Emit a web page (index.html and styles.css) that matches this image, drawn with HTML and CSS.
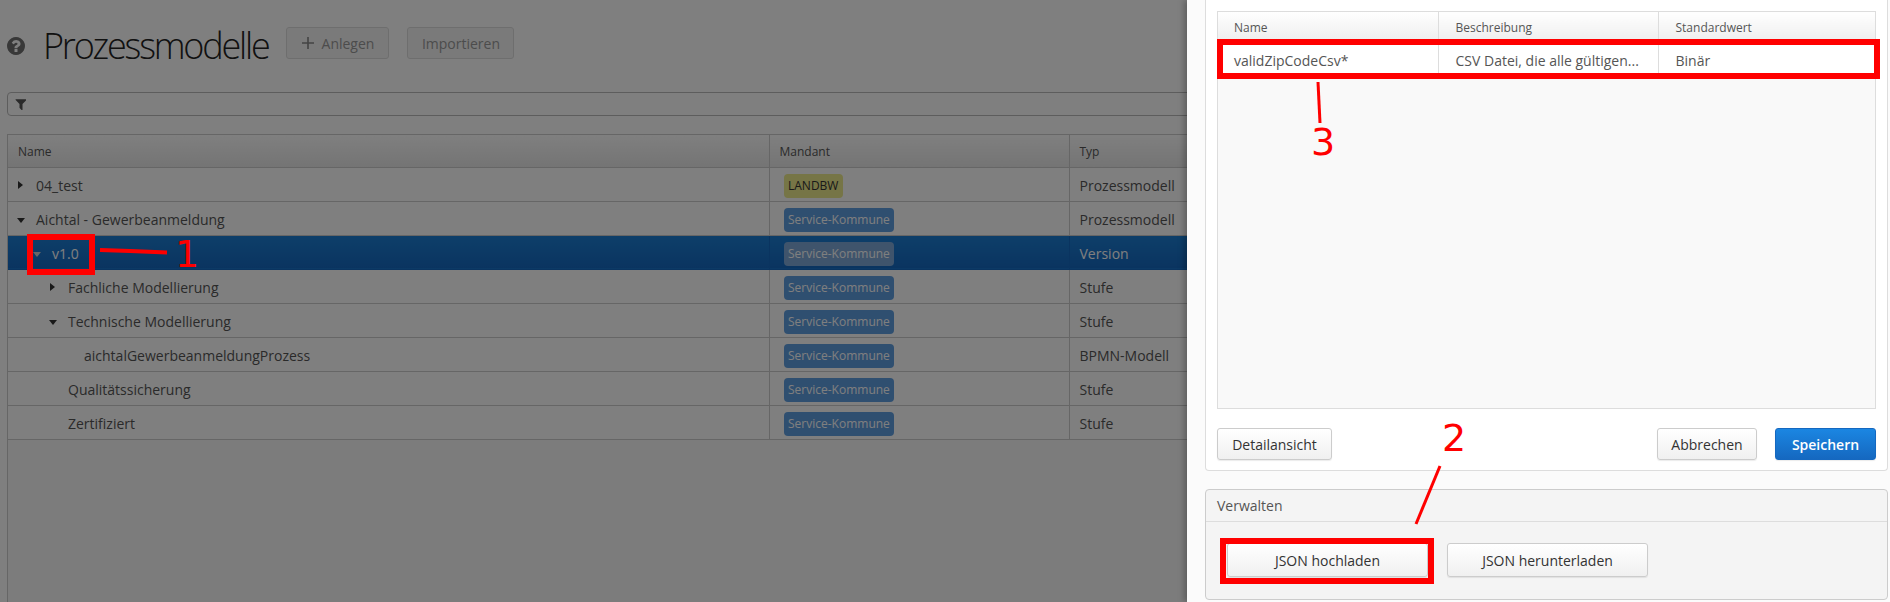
FILE: index.html
```html
<!DOCTYPE html>
<html>
<head>
	<meta charset="utf-8">
	<title>Prozessmodelle</title>
	<link rel="stylesheet" href="styles.css">
</head>
<body>
	<div class="page">
		<div class="head">
			<svg class="help" viewBox="128 128 1536 1536"><path d="M1024 1376v-192q0-14-9-23t-23-9h-192q-14 0-23 9t-9 23v192q0 14 9 23t23 9h192q14 0 23-9t9-23zm256-672q0-88-55.5-163t-138.5-116-170-41q-243 0-371 213-15 24 8 42l132 100q7 6 19 6 16 0 25-12 53-68 86-92 34-24 86-24 48 0 85.5 26t37.5 59q0 38-20 61t-68 45q-63 28-115.5 86.5t-52.5 125.5v36q0 14 9 23t23 9h192q14 0 23-9t9-23q0-19 21.5-49.5t54.5-49.5q32-18 49-28.5t46-35 44.5-48 28-60.5 12.5-81zm384 192q0 209-103 385.5t-279.5 279.5-385.5 103-385.5-103-279.5-279.5-103-385.5 103-385.5 279.5-279.5 385.5-103 385.5 103 279.5 279.5 103 385.5z"/></svg>
			<h1>Prozessmodelle</h1>
			<button class="btn btn-add" disabled><svg class="plus" viewBox="0 0 12 12"><path d="M6 0v12M0 6h12"/></svg>Anlegen</button>
			<button class="btn btn-import" disabled>Importieren</button>
		</div>
		<div class="filter">
			<svg class="funnel" viewBox="128 256 1408 1344"><path d="M1595 295q17 41-14 70l-493 493v742q0 42-39 59-13 5-25 5-27 0-45-19l-256-256q-19-19-19-45v-486l-493-493q-31-29-14-70 17-39 59-39h1280q42 0 59 39z"/></svg>
		</div>
		<div class="tree-wrap">
			<table class="tree">
				<colgroup><col class="c-name"><col class="c-mandant"><col></colgroup>
				<thead>
					<tr><th>Name</th><th>Mandant</th><th>Typ</th></tr>
				</thead>
				<tbody>
					<tr>
						<td class="lv0"><i class="caret right"></i>04_test</td>
						<td><span class="badge yellow">LANDBW</span></td>
						<td>Prozessmodell</td>
					</tr>
					<tr>
						<td class="lv0"><i class="caret down"></i>Aichtal - Gewerbeanmeldung</td>
						<td><span class="badge">Service-Kommune</span></td>
						<td>Prozessmodell</td>
					</tr>
					<tr class="selected">
						<td class="lv1"><i class="caret down"></i>v1.0</td>
						<td><span class="badge">Service-Kommune</span></td>
						<td>Version</td>
					</tr>
					<tr>
						<td class="lv2"><i class="caret right"></i>Fachliche Modellierung</td>
						<td><span class="badge">Service-Kommune</span></td>
						<td>Stufe</td>
					</tr>
					<tr>
						<td class="lv2"><i class="caret down"></i>Technische Modellierung</td>
						<td><span class="badge">Service-Kommune</span></td>
						<td>Stufe</td>
					</tr>
					<tr>
						<td class="lv3">aichtalGewerbeanmeldungProzess</td>
						<td><span class="badge">Service-Kommune</span></td>
						<td>BPMN-Modell</td>
					</tr>
					<tr>
						<td class="lv2">Qualitätssicherung</td>
						<td><span class="badge">Service-Kommune</span></td>
						<td>Stufe</td>
					</tr>
					<tr>
						<td class="lv2">Zertifiziert</td>
						<td><span class="badge">Service-Kommune</span></td>
						<td>Stufe</td>
					</tr>
				</tbody>
			</table>
		</div>
	</div>

	<div class="overlay"></div>

	<div class="drawer">
		<div class="card">
			<div class="params">
				<table class="param-table">
					<colgroup><col class="c-pname"><col class="c-pdesc"><col></colgroup>
					<thead>
						<tr><th>Name</th><th>Beschreibung</th><th>Standardwert</th></tr>
					</thead>
					<tbody>
						<tr><td>validZipCodeCsv*</td><td>CSV Datei, die alle gültigen...</td><td>Binär</td></tr>
					</tbody>
				</table>
			</div>
			<div class="actions">
				<button class="btn btn-detail">Detailansicht</button>
				<button class="btn btn-cancel">Abbrechen</button>
				<button class="btn btn-save">Speichern</button>
			</div>
		</div>
		<div class="manage">
			<div class="manage-title">Verwalten</div>
			<div class="manage-body">
				<button class="btn btn-json">JSON hochladen</button>
				<button class="btn btn-json">JSON herunterladen</button>
			</div>
		</div>
	</div>

	<!-- rote Markierungen -->
	<svg class="marks" width="1890" height="602">
		<rect x="30" y="237" width="62" height="35"/>
		<rect x="1220" y="42" width="657" height="34"/>
		<rect x="1223" y="541" width="208" height="40"/>
		<path class="stroke4" d="M100 250L130 251L167 252.5"/>
		<path d="M1440 466L1416 524"/>
		<path d="M1318 82L1320 123"/>
		<text x="187" y="267">1</text>
		<text x="1454" y="451">2</text>
		<text x="1323" y="155">3</text>
	</svg>
</body>
</html>
```

FILE: styles.css
```css
*{margin:0;padding:0;box-sizing:border-box;}
html,body{
	height: 100%;
	overflow: hidden;
}
body{
	position: relative;
	font-family: "Open Sans","Noto Sans",sans-serif;
	font-size: 14px;
	color: #555;
	background-color: #fff;
}

.btn{
	height: 32px;
	font-family: inherit;
	font-size: 14px;
	color: #333;
	border: 1px solid #ccc;
	border-radius: 3px;
	background: linear-gradient(#fff,#f0f0f0);
	box-shadow: 0 1px 1px rgba(0,0,0,.08);
}

/* Seite */
.page{
	height: 100%;
	padding: 27px 0 0 7px;
}
.head{
	display: flex;
	align-items: flex-start;
	height: 65px;
}
.help{
	width: 18px;
	height: 18px;
	margin: 10px 18px 0 0;
	fill: #707070;
}
h1{
	font-size: 36px;
	font-weight: 300;
	letter-spacing: -2.2px;
	line-height: 38px;
	margin-right: 18px;
	color: #222;
}
.head .btn{
	color: #999;
	border-color: #ddd;
	background: #f4f4f4;
	box-shadow: none;
}
.btn-add{
	width: 103px;
	margin-right: 18px;
}
.btn-import{
	width: 107px;
}
.plus{
	width: 12px;
	height: 12px;
	margin-right: 8px;
	fill: none;
	stroke: #888;
	stroke-width: 1.6;
}
.filter{
	display: flex;
	align-items: center;
	height: 24px;
	margin-right: 10px;
	padding-left: 7px;
	border: 1px solid #bbb;
	border-radius: 4px;
	background-color: #fff;
}
.funnel{
	width: 11px;
	height: 11px;
	fill: #555;
}
.tree-wrap{
	height: 468px;
	margin-top: 18px;
	margin-right: 10px;
	border-left: 1px solid #ccc;
	border-top: 1px solid #ccc;
	background-color: #f9f9f9;
}
.tree{
	width: 100%;
	table-layout: fixed;
	border-collapse: collapse;
}
.c-name{
	width: 761px;
}
.c-mandant{
	width: 300px;
}
.tree th{
	height: 32px;
	padding: 2px 0 0 10px;
	font-size: 12px;
	font-weight: 400;
	text-align: left;
	color: #555;
	background: linear-gradient(#fff,#e9e9e9);
	border-left: 1px solid #ccc;
	border-bottom: 1px solid #ccc;
}
.tree th:first-child{
	border-left: 0;
}
.tree td{
	height: 34px;
	padding: 2px 0 0 10px;
	background-color: #fff;
	border-left: 1px solid #ccc;
	border-bottom: 1px solid #ccc;
	white-space: nowrap;
}
.tree td:first-child{
	border-left: 0;
}
.tree td.lv0{padding-left: 28px;}
.tree td.lv1{padding-left: 44px;}
.tree td.lv2{padding-left: 60px;}
.tree td.lv3{padding-left: 76px;}
.tree .selected td{
	color: #fff;
	background: linear-gradient(#1b7ed4,#1568c0);
	border-color: #1568c0;
}
.caret{
	display: inline-block;
	margin-right: 0;
	vertical-align: 2px;
}
.caret.right{
	width: 6px;
	margin-left: -18px;
	margin-right: 12px;
	border-top: 4px solid transparent;
	border-bottom: 4px solid transparent;
	border-left: 5px solid #333;
}
.caret.down{
	width: 8px;
	margin-left: -19px;
	margin-right: 11px;
	border-left: 4px solid transparent;
	border-right: 4px solid transparent;
	border-top: 5px solid #333;
}
.selected .caret.down{
	border-top-color: #ccc;
}
.badge{
	display: inline-block;
	height: 24px;
	margin: 1px 0 0 4px;
	padding: 0 4.5px;
	font-size: 12px;
	line-height: 24px;
	color: #fff;
	border-radius: 4px;
	background-color: #5f9ee0;
}
.badge.yellow{
	color: #333;
	background-color: #ecea8c;
}
.selected .badge{
	background-color: #7fa9d8;
}

/* Abdunklung */
.overlay{
	position: absolute;
	top: 0;
	left: 0;
	right: 0;
	bottom: 0;
	background-color: rgba(0,0,0,.5);
}

/* Seitenleiste */
.drawer{
	position: absolute;
	top: 0;
	right: 0;
	bottom: 0;
	width: 703px;
	padding: 0 2px 0 18px;
	background-color: #fbfbfb;
	box-shadow: -3px 0 6px rgba(0,0,0,.25);
}
.card{
	display: flex;
	flex-direction: column;
	height: 471px;
	padding: 11px 11px 10px 11px;
	background-color: #fff;
	border: 1px solid #ddd;
	border-top: 0;
	border-radius: 0 0 4px 4px;
}
.params{
	height: 399px;
	border: 1px solid #ddd;
	background-color: #f9f9f9;
}
.param-table{
	width: 100%;
	table-layout: fixed;
	border-collapse: collapse;
}
.c-pname{
	width: 220px;
}
.c-pdesc{
	width: 220px;
}
.param-table th{
	height: 29px;
	padding: 1px 0 0 17px;
	font-size: 12px;
	font-weight: 400;
	text-align: left;
	color: #555;
	background: linear-gradient(#fff,#eee);
	border-left: 1px solid #ddd;
}
.param-table td{
	height: 37px;
	padding: 1px 0 0 17px;
	background-color: #fff;
	border-left: 1px solid #ddd;
	white-space: nowrap;
}
.param-table th:first-child,
.param-table td:first-child{
	padding-left: 16px;
	border-left: 0;
}
.actions{
	display: flex;
	margin-top: 19px;
}
.btn-detail{
	width: 115px;
	margin-right: auto;
}
.btn-cancel{
	width: 100px;
	margin-right: 18px;
}
.btn-save{
	width: 101px;
	font-weight: 600;
	color: #fff;
	border-color: #1568c0;
	background: linear-gradient(#1b86e2,#1568c0);
}
.manage{
	height: 111px;
	margin-top: 18px;
	background-color: #f4f4f4;
	border: 1px solid #ccc;
	border-radius: 4px;
}
.manage-title{
	height: 32px;
	padding-left: 11px;
	line-height: 31px;
	border-bottom: 1px solid #ddd;
}
.manage-body{
	display: flex;
	gap: 19px;
	padding: 21px 21px;
}
.btn-json{
	width: 201px;
	height: 34px;
}

/* Markierungen */
.marks{
	position: absolute;
	top: 0;
	left: 0;
}
.marks rect{
	fill: none;
	stroke: #f00;
	stroke-width: 6;
}
.marks path{
	fill: none;
	stroke: #f00;
	stroke-width: 3;
}
.marks path.stroke4{
	stroke-width: 4;
}
.marks text{
	font-family: "DejaVu Sans",sans-serif;
	font-size: 38px;
	text-anchor: middle;
	fill: #f00;
}
```
